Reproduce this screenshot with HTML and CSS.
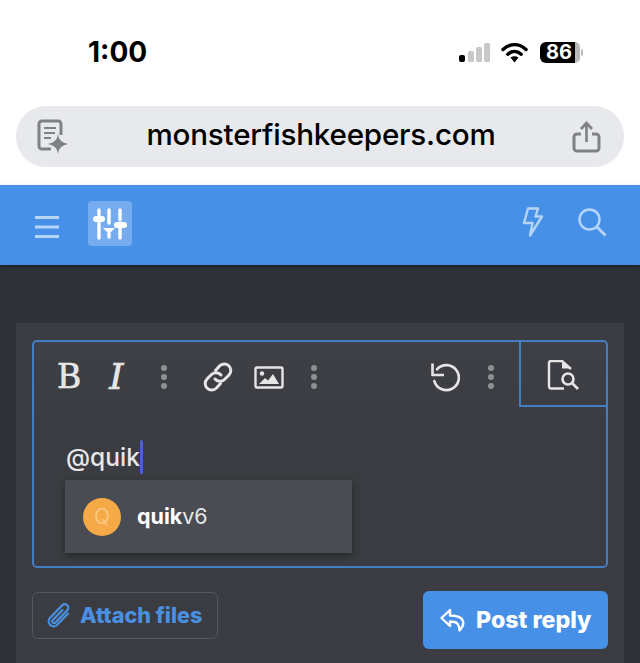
FILE: index.html
```html
<!DOCTYPE html>
<html lang="en">
<head>
    <meta charset="UTF-8">
    <meta name="viewport" content="width=device-width, initial-scale=1.0">
    <title>monsterfishkeepers.com</title>
    <link rel="stylesheet" href="styles.css">
</head>
<body>
<div class="browser">
    <div class="status-bar">
        <div class="time">1:00</div>
        <div class="status-icons">
            <svg class="signal" width="32" height="20" viewBox="0 0 32 20">
                <rect x="0" y="13" width="6" height="7" rx="2" fill="#000"/>
                <rect x="9" y="9" width="6" height="11" rx="1.5" fill="#c8c8c8"/>
                <rect x="17" y="5" width="6" height="15" rx="1.5" fill="#c8c8c8"/>
                <rect x="25" y="1" width="6" height="19" rx="1.5" fill="#c8c8c8"/>
            </svg>
            <svg class="wifi" width="27" height="21" viewBox="0 0 27 21">
                <path d="M2 7.5C9 1 18 1 25 7.5" fill="none" stroke="#000" stroke-width="3.4" stroke-linecap="round"/>
                <path d="M6.8 12.2C10.8 8.6 16.2 8.6 20.2 12.2" fill="none" stroke="#000" stroke-width="3.4" stroke-linecap="round"/>
                <path d="M9.5 15.6C12 13.7 15 13.7 17.5 15.6L13.5 20.5Z" fill="#000"/>
            </svg>
            <div class="battery"><span class="battery-level">86</span><span class="battery-rest"></span><span class="battery-tip"></span></div>
        </div>
    </div>
    <div class="url-wrap">
        <div class="url-bar">
            <svg class="url-icon" width="34" height="36" viewBox="0 0 34 36">
                <path d="M15 30H6a3 3 0 0 1-3-3V5a3 3 0 0 1 3-3h16a3 3 0 0 1 3 3v11" fill="none" stroke="#7f8186" stroke-width="3"/>
                <path d="M8 9h12M8 14h11M8 19h7" stroke="#7f8186" stroke-width="2"/>
                <path d="M22 15c1 6 3 8 10 10-7 2-9 4-10 10-1-6-3-8-10-10 7-2 9-4 10-10Z" fill="#7f8186"/>
            </svg>
            <div class="url-text">monsterfishkeepers.com</div>
            <svg class="url-icon" width="30" height="32" viewBox="0 0 30 32">
                <path d="M9 13H5a3 3 0 0 0-3 3v11a3 3 0 0 0 3 3h19a3 3 0 0 0 3-3V16a3 3 0 0 0-3-3h-4" fill="none" stroke="#7f8186" stroke-width="3"/>
                <path d="M14.500 21V3M9 8l5.500-6L20 8" fill="none" stroke="#7f8186" stroke-width="2.600"/>
            </svg>
        </div>
    </div>
</div>

<header class="site-header">
    <svg class="burger" width="26" height="22" viewBox="0 0 26 22">
        <path d="M1 1.500h24M1 11h24M1 20.500h24" stroke="#b5d5f7" stroke-width="2.800"/>
    </svg>
    <div class="logo">
        <svg width="34" height="32" viewBox="0 0 34 32">
            <g stroke="#fff" stroke-width="3.400" stroke-linecap="round" fill="none">
                <path d="M6 2v5M6 14v16M16 2v13M16 26v3M27 2v10M27 20v10"/>
            </g>
            <g fill="#fff">
                <rect x="0" y="8" width="12" height="6" rx="3"/>
                <path d="M10 20h12l-6 6Z"/>
                <rect x="21" y="14" width="13" height="6" rx="3"/>
            </g>
        </svg>
    </div>
    <div class="header-actions">
        <svg width="22" height="30" viewBox="0 0 22 30">
            <path d="M6 1.500h10l-2.500 8H20L8 28.500l2.500-12.500H2Z" fill="none" stroke="#b5d5f7" stroke-width="2.400" stroke-linejoin="round"/>
        </svg>
        <svg width="30" height="30" viewBox="0 0 30 30">
            <circle cx="12.500" cy="12.500" r="10" fill="none" stroke="#b5d5f7" stroke-width="2.400"/>
            <path d="M20 20l8.500 8.500" stroke="#b5d5f7" stroke-width="3"/>
        </svg>
    </div>
</header>

<main class="page">
    <div class="card">
        <div class="editor">
            <div class="toolbar">
                <div class="tools">
                    <span class="tool-b">B</span>
                    <span class="tool-i">I</span>
                    <span class="dots"><i></i><i></i><i></i></span>
                    <svg class="tool-link" width="32" height="32" viewBox="0 0 32 32">
                        <g fill="none" stroke="#e6e6e6" stroke-width="3" stroke-linecap="round">
                            <path d="M13.500 9.500l4-4.500a6.500 6.500 0 0 1 9.500 9l-4.500 4.500a6.500 6.500 0 0 1-9.500-.5"/>
                            <path d="M18.500 22.500l-4 4.500a6.500 6.500 0 0 1-9.500-9l4.500-4.500a6.500 6.500 0 0 1 9.500.5"/>
                        </g>
                    </svg>
                    <svg class="tool-image" width="30" height="23" viewBox="0 0 30 23">
                        <rect x="1.500" y="1.500" width="27" height="20" rx="1.500" fill="none" stroke="#e6e6e6" stroke-width="2.400"/>
                        <circle cx="8" cy="7.500" r="2.200" fill="#e6e6e6"/>
                        <path d="M5 18l6-6 3 2.500 5-6.500 6 10Z" fill="#e6e6e6"/>
                    </svg>
                    <span class="dots"><i></i><i></i><i></i></span>
                    <span class="spacer"></span>
                    <svg class="tool-undo" width="30" height="30" viewBox="0 0 30 30">
                        <path d="M6 8.500A12.500 12.500 0 1 1 5 20.500" fill="none" stroke="#e6e6e6" stroke-width="2.600" stroke-linecap="round" transform="rotate(8 15 15)"/>
                        <path d="M2.500 1.500v11.500h11.500" fill="none" stroke="#e6e6e6" stroke-width="2.600" stroke-linejoin="round"/>
                    </svg>
                    <span class="dots"><i></i><i></i><i></i></span>
                </div>
                <div class="preview">
                    <svg width="34" height="30" viewBox="0 0 34 30">
                        <path d="M17 28.500H4a2 2 0 0 1-2-2V3a2 2 0 0 1 2-2h11l9 8" fill="none" stroke="#e6e6e6" stroke-width="2.400"/>
                        <path d="M15 1.500v7h8Z" fill="#e6e6e6"/>
                        <circle cx="21" cy="19" r="5.500" fill="none" stroke="#e6e6e6" stroke-width="2.600"/>
                        <path d="M25 23l6 6" stroke="#e6e6e6" stroke-width="2.600"/>
                    </svg>
                </div>
            </div>
            <div class="editor-body">
                <div class="editor-text">@quik<span class="caret"></span></div>
                <div class="mention-menu">
                    <span class="avatar">Q</span>
                    <span class="mention-name"><strong>quik</strong>v6</span>
                </div>
            </div>
        </div>
        <div class="form-actions">
            <div class="attach-btn">
                <svg width="26" height="28" viewBox="0 0 26 28">
                    <path d="M22 11.500L11 23a5 5 0 0 1-7.500-6.500L16 3.500a3.500 3.500 0 0 1 5.500 4.500L9.500 20.500a1.800 1.800 0 0 1-2.800-2.300L16.500 8" fill="none" stroke="#4a90e2" stroke-width="2.200" stroke-linecap="round"/>
                </svg>
                <span>Attach files</span>
            </div>
            <div class="post-btn">
                <svg width="28" height="24" viewBox="0 0 28 24">
                    <path d="M10 2L1.500 10 10 18v-4.500c6 0 9 1.500 9.500 9 5-5 7.500-15-9.500-15Z" fill="none" stroke="#fff" stroke-width="2.400" stroke-linejoin="round"/>
                </svg>
                <span>Post reply</span>
            </div>
        </div>
    </div>
</main>
</body>
</html>
```

FILE: styles.css
```css
html, body {
    margin: 0;
    padding: 0;
}

body {
    width: 640px;
    height: 663px;
    overflow: hidden;
    background: #fff;
    font-family: Inter, "Liberation Sans", sans-serif;
}

.browser {
    height: 185px;
    background: #fff;
}

.status-bar {
    height: 106px;
    box-sizing: border-box;
    display: flex;
    justify-content: space-between;
    padding: 36px 56px 0 88px;
}

.time {
    font-size: 28px;
    line-height: 32px;
    font-weight: 700;
    color: #000;
}

.status-icons {
    display: flex;
    align-items: center;
    height: 32px;
    gap: 12px;
}

.signal {
    margin-right: -2px;
}

.battery {
    display: flex;
    align-items: center;
    width: 44px;
}

.battery-level {
    width: 35px;
    height: 21px;
    background: #000;
    color: #fff;
    font-size: 20px;
    line-height: 21px;
    font-weight: 700;
    padding-left: 6px;
    box-sizing: border-box;
    border-radius: 6px 0 0 6px;
}

.battery-rest {
    width: 5px;
    height: 21px;
    background: #b9b9b9;
    border-radius: 0 6px 6px 0;
}

.battery-tip {
    width: 2px;
    height: 7px;
    background: #b9b9b9;
    border-radius: 0 2px 2px 0;
    margin-left: 1px;
}

.url-wrap {
    padding: 0 16px;
}

.url-bar {
    height: 61px;
    box-sizing: border-box;
    background: #e8e9ec;
    border-radius: 30px;
    display: flex;
    align-items: center;
    justify-content: space-between;
    padding: 0 22px 0 20px;
}

.url-text {
    font-size: 29.600px;
    line-height: 56px;
    margin-top: -5px;
    font-weight: 500;
    color: #000;
    letter-spacing: -0.2px;
}

.site-header {
    height: 80px;
    box-sizing: border-box;
    background: #4790e8;
    display: flex;
    align-items: center;
    padding: 0 33px 0 34px;
    position: relative;
    box-shadow: 0 2px 4px rgba(0, 0, 0, 0.4);
}

.burger {
    margin-top: 3px;
}

.logo {
    width: 44px;
    height: 45px;
    margin-left: 28px;
    margin-top: -3px;
    background: #74acef;
    border-radius: 4px;
    display: flex;
    align-items: center;
    justify-content: center;
}

.header-actions {
    margin-left: auto;
    display: flex;
    align-items: center;
    gap: 33px;
    margin-top: -6px;
}

.page {
    height: 398px;
    box-sizing: border-box;
    background: #2f3239;
    padding: 58px 16px 0;
}

.card {
    height: 340px;
    box-sizing: border-box;
    background: #3a3c41;
    padding: 17px 16px 0;
}

.editor {
    height: 228px;
    box-sizing: border-box;
    border: 2px solid #457cc4;
    border-radius: 5px;
    background: linear-gradient(#3e4046, #3a3c41 40%);
}

.toolbar {
    display: flex;
    height: 65px;
}

.tools {
    flex: 1;
    display: flex;
    align-items: center;
    padding: 5px 0 0 23px;
    color: #e6e6e6;
}

.tool-b,
.tool-i {
    font-family: "DejaVu Serif", "Liberation Serif", serif;
    font-size: 33px;
    line-height: 36px;
    color: #e6e6e6;
    -webkit-text-stroke: 0.7px #e6e6e6;
}

.tool-i {
    font-style: italic;
    font-size: 36px;
    margin-left: 28px;
}

.dots {
    display: flex;
    flex-direction: column;
    gap: 3px;
}

.dots i {
    width: 6px;
    height: 6px;
    border-radius: 50%;
    background: #8e9094;
}

.tool-b + .tool-i + .dots {
    margin-left: 37px;
}

.tool-link {
    margin-left: 35px;
}

.tool-image {
    margin-left: 20px;
}

.tool-image + .dots {
    margin-left: 27px;
}

.spacer {
    flex: 1;
}

.tool-undo {
    margin-top: -1px;
}

.tool-undo + .dots {
    margin-left: 28px;
}

.tools > .dots:last-child {
    margin-right: 25px;
}

.preview {
    width: 87px;
    height: 65px;
    box-sizing: border-box;
    padding-top: 2px;
    border-left: 2px solid #457cc4;
    border-bottom: 2px solid #457cc4;
    display: flex;
    align-items: center;
    justify-content: center;
}

.editor-body {
    padding: 33px 0 0 31px;
}

.editor-text {
    font-size: 24.500px;
    line-height: 32px;
    margin-left: 1px;
    font-weight: 500;
    color: #e8e8e8;
    display: flex;
    align-items: center;
}

.caret {
    width: 3px;
    height: 34px;
    background: #4a5fd0;
    border-radius: 2px;
}

.mention-menu {
    margin-top: 6px;
    width: 287px;
    height: 73px;
    box-sizing: border-box;
    background: #4a4c54;
    box-shadow: 0 3px 8px rgba(0, 0, 0, 0.35);
    display: flex;
    align-items: center;
    padding-left: 18px;
    gap: 16px;
}

.avatar {
    width: 38px;
    height: 38px;
    border-radius: 50%;
    background: #f5a947;
    color: #fbc67f;
    font-size: 21px;
    line-height: 38px;
    text-align: center;
}

.mention-name {
    font-size: 21.500px;
    line-height: 26px;
    margin-top: -1px;
    color: #e8e8e8;
}

.mention-name strong {
    color: #fff;
    font-weight: 700;
}

.form-actions {
    display: flex;
    justify-content: space-between;
    align-items: flex-start;
    margin-top: 23px;
}

.attach-btn {
    width: 186px;
    height: 47px;
    margin-top: 1px;
    box-sizing: border-box;
    border: 1.500px solid #55575c;
    border-radius: 6px;
    display: flex;
    align-items: center;
    gap: 8px;
    padding-left: 13px;
    color: #4a90e2;
    font-size: 21.600px;
    line-height: 26px;
    font-weight: 800;
}

.attach-btn span {
    margin-top: -2px;
}

.post-btn {
    width: 185px;
    height: 58px;
    box-sizing: border-box;
    background: #4790e8;
    border-radius: 6px;
    display: flex;
    align-items: center;
    justify-content: flex-start;
    padding-left: 17px;
    gap: 8px;
    color: #fff;
    font-size: 23.200px;
    font-weight: 800;
}
```
